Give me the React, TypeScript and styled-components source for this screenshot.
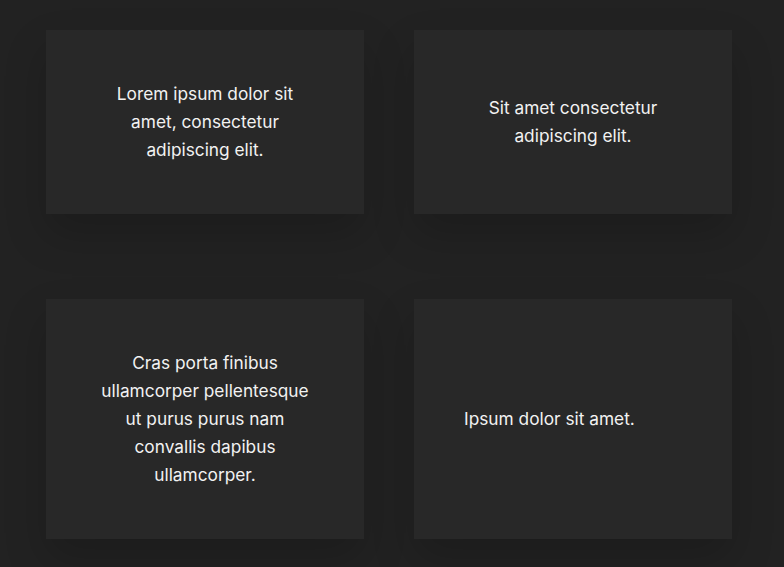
import React from "react";
import styled, { createGlobalStyle } from "styled-components";

const Global = createGlobalStyle`
  html, body { margin: 0; padding: 0; background: #222222; }
  body { font-family: Inter, "Noto Sans", sans-serif; }
`;

const Page = styled.div`
  box-sizing: border-box;
  width: 784px;
  min-height: 567px;
  padding: 30px 52px 30px 46px;
`;

const Grid = styled.div`
  display: grid;
  grid-template-columns: 318px 318px;
  column-gap: 50px;
  row-gap: 85px;
`;

const Card = styled.div<{ $align: "center" | "left" }>`
  box-sizing: border-box;
  background: #282828;
  box-shadow: 0 20px 40px rgba(0, 0, 0, 0.18);
  padding: 50px;
  display: flex;
  align-items: center;
  justify-content: ${(p) => (p.$align === "left" ? "flex-start" : "center")};
  text-align: ${(p) => p.$align};
`;

const Text = styled.p`
  margin: 0;
  color: #f2f2f2;
  font-size: 17.3px;
  line-height: 28px;
  max-width: 218px;
`;

const items: { text: string; align: "center" | "left" }[] = [
  { text: "Lorem ipsum dolor sit amet, consectetur adipiscing elit.", align: "center" },
  { text: "Sit amet consectetur adipiscing elit.", align: "center" },
  { text: "Cras porta finibus ullamcorper pellentesque ut purus purus nam convallis dapibus ullamcorper.", align: "center" },
  { text: "Ipsum dolor sit amet.", align: "left" },
];

export default function App() {
  return (
    <Page>
      <Global />
      <Grid>
        {items.map((it, i) => (
          <Card key={i} $align={it.align}>
            <Text>{it.text}</Text>
          </Card>
        ))}
      </Grid>
    </Page>
  );
}
